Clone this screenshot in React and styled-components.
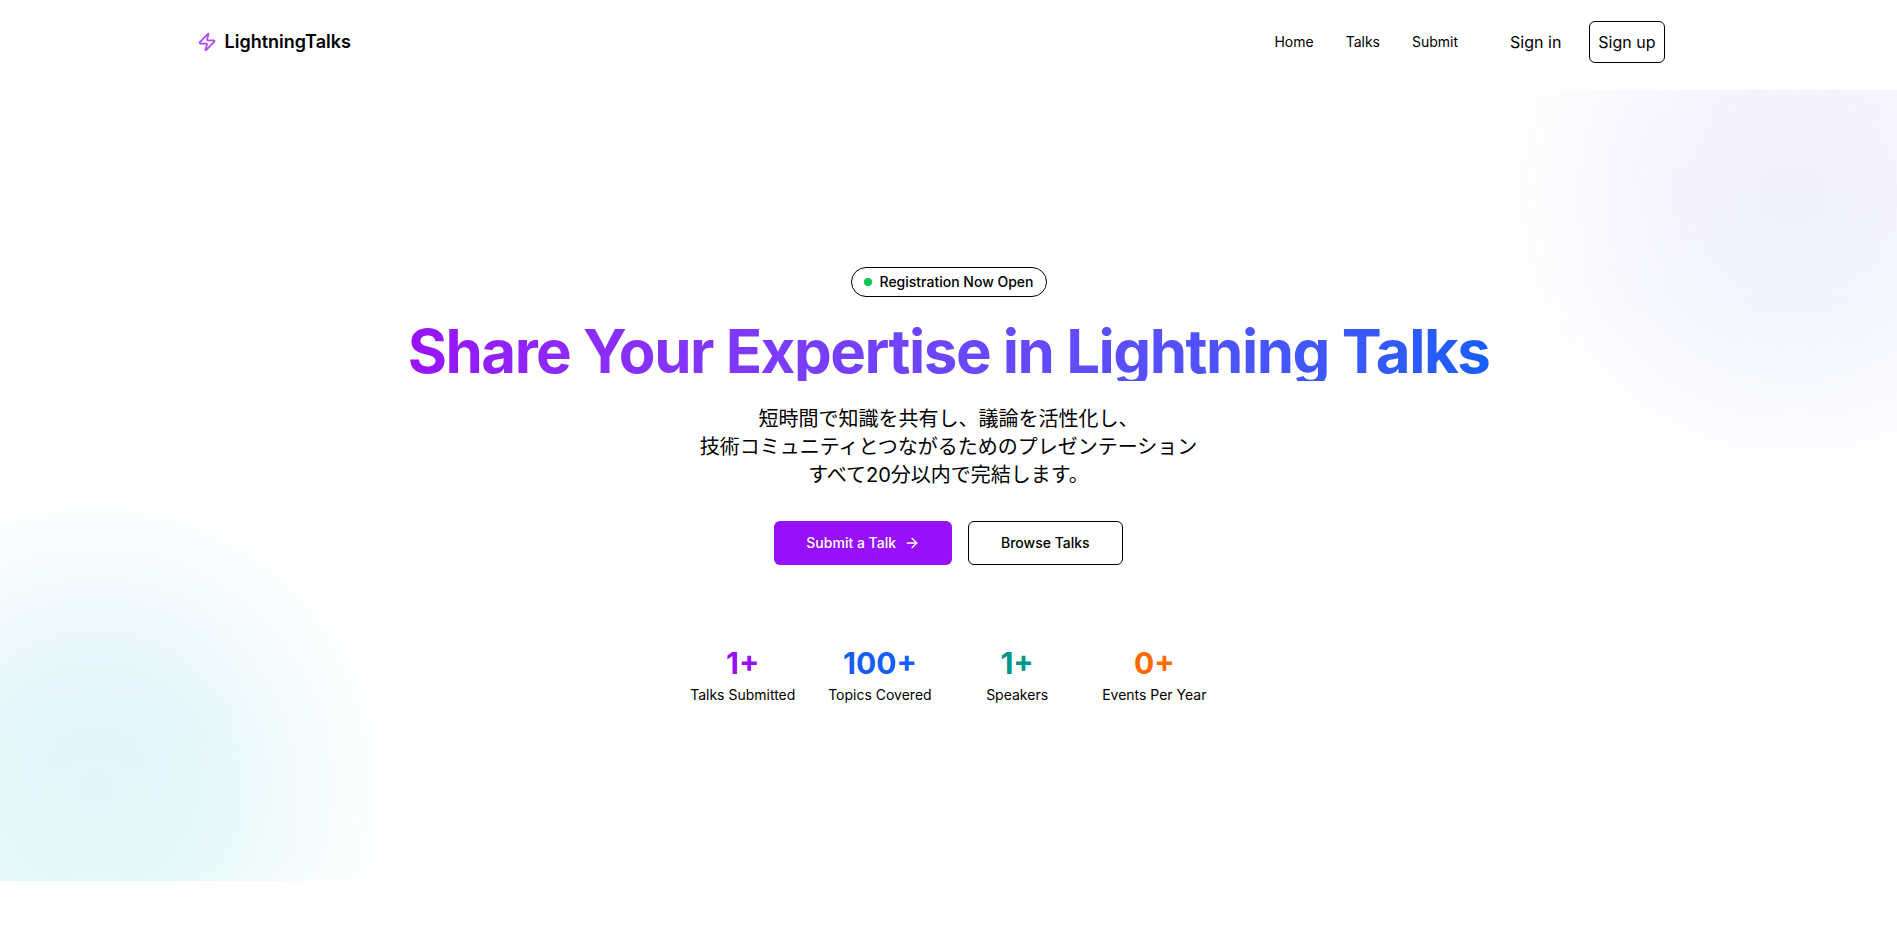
import React from "react";
import styled, { createGlobalStyle } from "styled-components";
import { ArrowRight, Zap } from "lucide-react";

const GlobalStyle = createGlobalStyle`
  *, *::before, *::after { box-sizing: border-box; }
  body {
    margin: 0;
    background: #fff;
    color: #000;
    font-family: Inter, "Noto Sans CJK JP", sans-serif;
    font-size: 16px;
    line-height: 24px;
  }
  h1, p, ul, dl, dd { margin: 0; padding: 0; }
  a { color: inherit; text-decoration: none; }
  button { font: inherit; color: inherit; cursor: pointer; }
`;

const Header = styled.header`
  display: flex;
  align-items: flex-start;
  justify-content: space-between;
  max-width: 1536px;
  height: 90px;
  margin: 0 auto;
  padding: 21px 52px 0 16px;
`;

const Logo = styled.a`
  display: flex;
  align-items: center;
  gap: 8px;
  height: 42px;
  font-size: 18px;
  font-weight: 600;
  line-height: 28px;

  svg { color: #ad46ff; }
`;

const HeaderEnd = styled.div`
  display: flex;
  align-items: center;
  gap: 43px;
`;

const NavList = styled.ul`
  display: flex;
  gap: 32px;
  list-style: none;
  font-size: 14px;
  line-height: 20px;
`;

const AuthGroup = styled.div`
  display: flex;
  gap: 19px;
`;

const AuthButton = styled.button`
  height: 42px;
  padding: 0 8px;
  border: 1px solid ${({ $outlined }) => ($outlined ? "#000" : "transparent")};
  border-radius: 6px;
  background: transparent;
`;

const Hero = styled.section`
  position: relative;
  display: flex;
  align-items: center;
  justify-content: center;
  min-height: 85vh;
  overflow: hidden;
`;

const Glow = styled.div`
  position: absolute;
  width: 400px;
  height: 400px;
  border-radius: 50%;
  filter: blur(80px);
`;

const TopGlow = styled(Glow)`
  top: -96px;
  right: -96px;
  background: linear-gradient(to bottom, rgba(152, 70, 255, 0.09), rgba(43, 127, 255, 0.09));
`;

const BottomGlow = styled(Glow)`
  bottom: -104px;
  left: -104px;
  background: linear-gradient(to top, rgba(0, 213, 190, 0.12), rgba(0, 160, 244, 0.12));
`;

const HeroContent = styled.div`
  position: relative;
  display: flex;
  flex-direction: column;
  align-items: center;
  padding: 0 16px;
  text-align: center;
`;

const Badge = styled.div`
  display: flex;
  align-items: center;
  gap: 8px;
  height: 30px;
  padding: 0 12px;
  border: 1px solid #000;
  border-radius: 15px;
  font-size: 14px;
  font-weight: 500;
  line-height: 20px;
`;

const StatusDot = styled.span`
  width: 8px;
  height: 8px;
  border-radius: 50%;
  background: #00c950;
`;

const Title = styled.h1`
  margin-top: 24px;
  background: linear-gradient(to right in oklab, #9810fa, #155dfc);
  background-clip: text;
  -webkit-background-clip: text;
  color: transparent;
  font-size: 60px;
  font-weight: 700;
  line-height: 60px;
  letter-spacing: -0.025em;
`;

const Lead = styled.p`
  margin-top: 24px;
  font-size: 20px;
  line-height: 28px;
`;

const Actions = styled.div`
  display: flex;
  gap: 16px;
  margin-top: 32px;
`;

const ActionButton = styled.button`
  display: flex;
  align-items: center;
  gap: 8px;
  height: 44px;
  padding: 0 32px;
  border: ${({ $primary }) => ($primary ? "none" : "1px solid #000")};
  border-radius: 6px;
  background: ${({ $primary }) => ($primary ? "#9810fa" : "#fff")};
  color: ${({ $primary }) => ($primary ? "#fff" : "#000")};
  font-size: 14px;
  font-weight: 500;
  line-height: 20px;
`;

const Stats = styled.dl`
  display: grid;
  grid-template-columns: repeat(4, 1fr);
  gap: 32px;
  margin-top: 80px;
`;

const Stat = styled.div`
  display: flex;
  flex-direction: column-reverse;
  gap: 4px;
`;

const StatValue = styled.dd`
  color: ${({ $color }) => $color};
  font-size: 30px;
  font-weight: 700;
  line-height: 36px;
`;

const StatLabel = styled.dt`
  font-size: 14px;
  line-height: 20px;
`;

const links = ["Home", "Talks", "Submit"];

const stats = [
  { value: "1+", label: "Talks Submitted", color: "#9810fa" },
  { value: "100+", label: "Topics Covered", color: "#155dfc" },
  { value: "1+", label: "Speakers", color: "#009689" },
  { value: "0+", label: "Events Per Year", color: "#ff6900" },
];

export default function App() {
  return (
    <>
      <GlobalStyle />
      <Header>
        <Logo href="#">
          <Zap size={20} aria-hidden="true" />
          LightningTalks
        </Logo>
        <HeaderEnd>
          <nav>
            <NavList>
              {links.map((label) => (
                <li key={label}>
                  <a href={`#${label.toLowerCase()}`}>{label}</a>
                </li>
              ))}
            </NavList>
          </nav>
          <AuthGroup>
            <AuthButton type="button">Sign in</AuthButton>
            <AuthButton type="button" $outlined>Sign up</AuthButton>
          </AuthGroup>
        </HeaderEnd>
      </Header>
      <main>
        <Hero>
          <TopGlow />
          <BottomGlow />
          <HeroContent>
            <Badge>
              <StatusDot />
              Registration Now Open
            </Badge>
            <Title>Share Your Expertise in Lightning Talks</Title>
            <Lead>
              短時間で知識を共有し、議論を活性化し、
              <br />
              技術コミュニティとつながるためのプレゼンテーション
              <br />
              すべて20分以内で完結します。
            </Lead>
            <Actions>
              <ActionButton type="button" $primary>
                Submit a Talk
                <ArrowRight size={16} aria-hidden="true" />
              </ActionButton>
              <ActionButton type="button">Browse Talks</ActionButton>
            </Actions>
            <Stats>
              {stats.map(({ value, label, color }) => (
                <Stat key={label}>
                  <StatLabel>{label}</StatLabel>
                  <StatValue $color={color}>{value}</StatValue>
                </Stat>
              ))}
            </Stats>
          </HeroContent>
        </Hero>
      </main>
    </>
  );
}
